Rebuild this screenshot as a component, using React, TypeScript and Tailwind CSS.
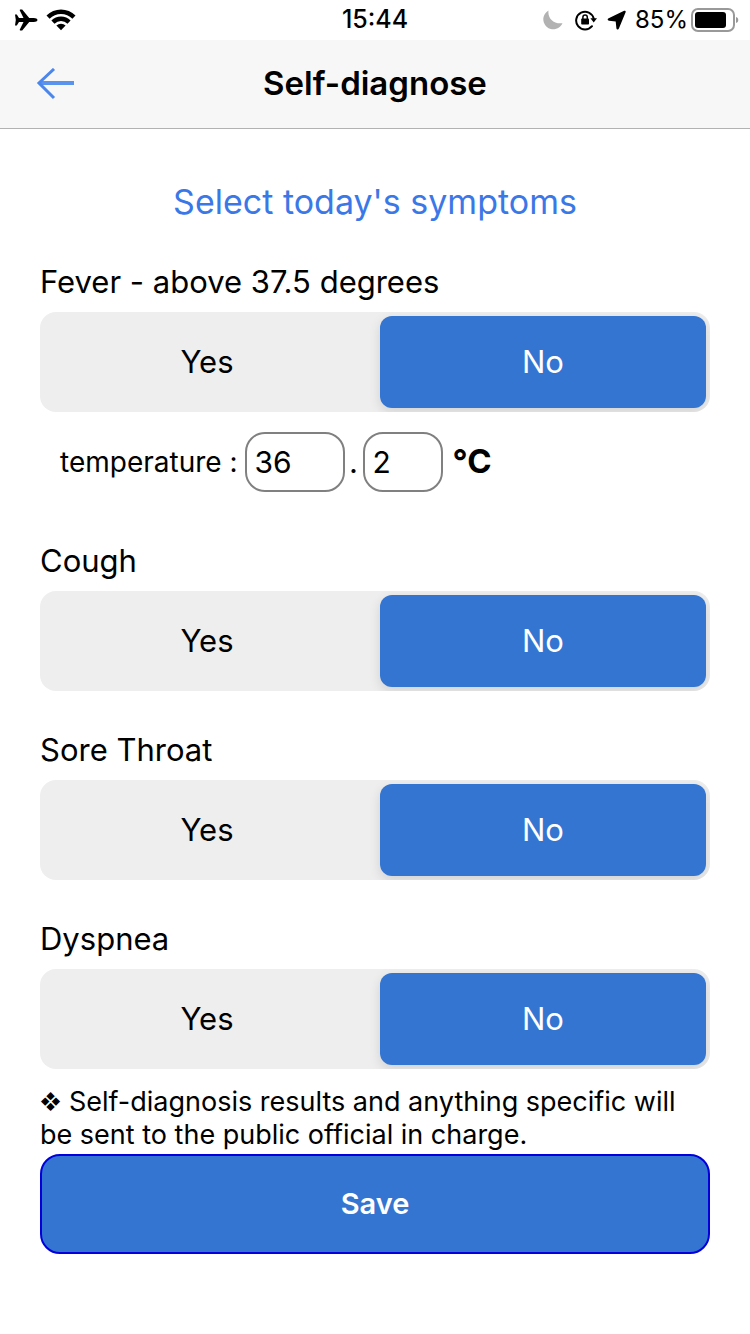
import { useState } from 'react';

interface ChoiceProps {
  name: string;
  label: string;
  value: string;
  onChange: (value: string) => void;
}

const symptoms = [
  { id: 'cough', label: 'Cough' },
  { id: 'throat', label: 'Sore Throat' },
  { id: 'dyspnea', label: 'Dyspnea' },
];

function StatusBar() {
  return (
    <div className="grid h-10 grid-cols-[1fr_auto_1fr] items-center bg-white px-[11px]">
      <div className="flex items-center gap-2 pl-1">
        <svg className="h-[22px] w-[23px]" viewBox="0 0 23 22" aria-hidden="true">
          <path d="M0 5.500h1.800L4 9h4.500L4.700 1.200 5 .5h2.200L14.200 9h4.600c2 0 3.700.9 3.700 2s-1.700 2-3.700 2h-4.600L7.200 21.500H5l-.3-.7L8.500 13H4l-2.200 3.500H0l.8-5.500z" />
        </svg>
        <svg className="h-[22px] w-[30px]" viewBox="0 0 30 22" aria-hidden="true">
          <path d="M.5 6.500a20.500 20.500 0 0 1 29 0L26.400 9.700a16.200 16.200 0 0 0-22.800 0z" />
          <path d="M5.400 11.600a13.500 13.500 0 0 1 19.200 0l-3.100 3.100a9.200 9.200 0 0 0-13 0z" />
          <path d="M10.400 16.600a6.500 6.500 0 0 1 9.200 0L15 21.300z" />
        </svg>
      </div>
      <span className="text-[25px] font-medium">15:44</span>
      <div className="flex items-center justify-end">
        <svg className="mr-3 h-5 w-5" viewBox="0 0 20 20" aria-hidden="true">
          <path d="M5.500.5C4.500 7.500 10 14.300 19.500 13.200A10 10 0 1 1 5.500.5z" fill="#b2b2b2" />
        </svg>
        <svg className="mr-[10px] h-[22px] w-[22px]" viewBox="0 0 22 22" aria-hidden="true">
          <path d="M17 17.200A8.900 8.900 0 1 1 18.700 9.500" fill="none" stroke="#000" strokeWidth="2" strokeLinecap="round" />
          <path d="M15.400 9.200h6.600L18.700 13.500z" />
          <rect x="6.200" y="9.600" width="7.800" height="6" rx=".8" />
          <path d="M7.900 10V8.200a2.200 2.200 0 0 1 4.400 0V10" fill="none" stroke="#000" strokeWidth="1.500" />
        </svg>
        <svg className="mr-[9px] h-5 w-[19px]" viewBox="1 0 19 20" aria-hidden="true">
          <path d="M19.600 2.300 12.900 18.600c-.6 1.400-2.300 1.100-2.500-.4l-.7-6.800-6.600-.6c-1.700-.2-1.900-1.900-.4-2.600L17.600 1.100c1.400-.7 2.500.1 2 1.200z" />
        </svg>
        <span className="mr-[3px] text-2xl">85%</span>
        <svg className="h-6 w-12" viewBox="0 0 48 24" aria-hidden="true">
          <rect x="1" y="1" width="42" height="22" rx="6" fill="none" stroke="#999" strokeWidth="2" />
          <rect x="4" y="4" width="31" height="16" rx="3" />
          <path d="M45 9c3 .5 3 5.500 0 6z" fill="#999" />
        </svg>
      </div>
    </div>
  );
}

function Choice({ name, label, value, onChange }: ChoiceProps) {
  return (
    <fieldset>
      <legend className="mb-[2px] text-[31px] leading-[56px]">{label}</legend>
      <div className="grid h-[100px] grid-cols-2 gap-[10px] overflow-hidden rounded-2xl bg-[#eeeeee] p-1">
        {['Yes', 'No'].map((option) => (
          <label
            key={option}
            className="flex items-center justify-center rounded-xl text-[31px] has-checked:bg-[#3375d1] has-checked:text-white has-checked:shadow-[0_4px_12px_rgba(0,0,0,0.12)]"
          >
            <input
              type="radio"
              className="sr-only"
              name={name}
              value={option}
              checked={value === option}
              onChange={() => onChange(option)}
            />
            {option}
          </label>
        ))}
      </div>
    </fieldset>
  );
}

export default function App() {
  const [answers, setAnswers] = useState<Record<string, string>>({
    fever: 'No',
    cough: 'No',
    throat: 'No',
    dyspnea: 'No',
  });
  const [degrees, setDegrees] = useState('36');
  const [decimal, setDecimal] = useState('2');

  const setAnswer = (id: string, value: string) => setAnswers({ ...answers, [id]: value });

  return (
    <div className="min-h-screen bg-white font-['Inter',sans-serif] text-black">
      <StatusBar />
      <header className="grid h-[89px] grid-cols-[80px_1fr_80px] items-center border-b border-[#b2b2b2] bg-[#f7f7f7]">
        <button type="button" aria-label="Back" className="pl-9">
          <svg className="h-8 w-10" viewBox="0 0 40 32" fill="none" stroke="#4a86ec" aria-hidden="true">
            <path d="M4 15h34" strokeWidth="4" stroke="#5a93ee" />
            <path d="M18 1 3 15l15 15" strokeWidth="3" />
          </svg>
        </button>
        <h1 className="text-center text-[33px] font-semibold">Self-diagnose</h1>
      </header>

      <main className="px-10 pt-[51px]">
        <h2 className="mb-[30px] text-center text-[34px] leading-[44px] text-[#3b78e7]">
          Select today's symptoms
        </h2>

        <Choice
          name="fever"
          label="Fever - above 37.5 degrees"
          value={answers.fever}
          onChange={(value) => setAnswer('fever', value)}
        />
        <div className="mt-5 mb-[41px] flex items-center pl-5">
          <label htmlFor="degrees" className="mr-[7px] text-[28px]">
            temperature :
          </label>
          <input
            id="degrees"
            inputMode="numeric"
            className="h-[60px] w-[100px] rounded-[20px] border-2 border-[#808080] px-2 text-[30px]"
            value={degrees}
            onChange={(e) => setDegrees(e.target.value)}
          />
          <span className="w-[18px] text-center text-[31px]">.</span>
          <input
            aria-label="Tenths of a degree"
            inputMode="numeric"
            className="h-[60px] w-20 rounded-[20px] border-2 border-[#808080] px-2 text-[30px]"
            value={decimal}
            onChange={(e) => setDecimal(e.target.value)}
          />
          <span className="ml-[10px] text-[33px] font-bold">°C</span>
        </div>

        <div className="space-y-[31px]">
          {symptoms.map((symptom) => (
            <Choice
              key={symptom.id}
              name={symptom.id}
              label={symptom.label}
              value={answers[symptom.id]}
              onChange={(value) => setAnswer(symptom.id, value)}
            />
          ))}
        </div>

        <p className="mt-4 mb-[3px] text-[27px] leading-[33px] before:mr-2 before:align-[2px] before:text-xl before:leading-none before:content-['❖']">
          Self-diagnosis results and anything specific will be sent to the public official in charge.
        </p>
        <button
          type="button"
          className="h-[100px] w-full rounded-[20px] border-2 border-[#0000dd] bg-[#3375d1] text-[29px] font-semibold text-white"
        >
          Save
        </button>
      </main>
    </div>
  );
}
